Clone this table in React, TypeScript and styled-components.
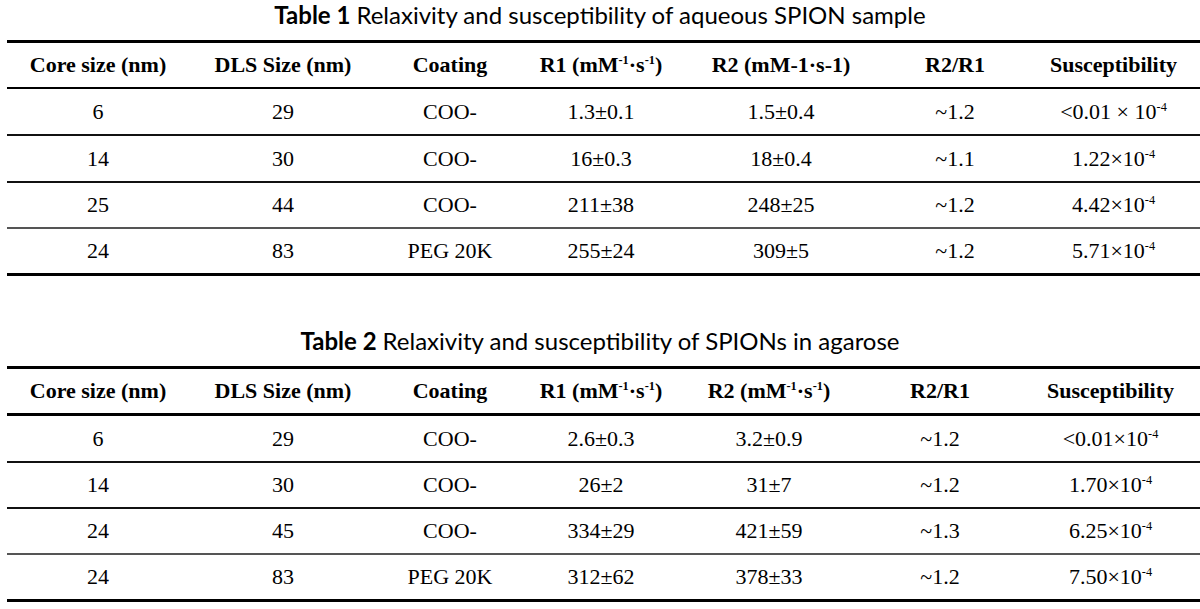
import React from "react";
import styled, { createGlobalStyle } from "styled-components";

const Global = createGlobalStyle`
  html, body { margin: 0; padding: 0; background: #fff; overflow: hidden; }
  body { width: 1200px; height: 609px; }
`;

const Page = styled.div`
  display: flex;
  flex-direction: column;
  padding-left: 7px;
  width: 1193px;
`;

const Section = styled.section<{ $top: number }>`
  display: flex;
  flex-direction: column;
  margin-top: ${(p) => p.$top}px;
`;

const Title = styled.h2`
  margin: 0;
  height: 40px;
  display: flex;
  align-items: flex-start;
  justify-content: center;
  margin-left: -7px;
  font-family: Lato, "Open Sans", sans-serif;
  font-weight: 400;
  font-size: 24px;
  line-height: 30px;
  color: #000;
  b { font-weight: 700; margin-right: 6px; }
`;

const Table = styled.div`
  display: flex;
  flex-direction: column;
  border-top: 3px solid #000;
  border-bottom: 3px solid #000;
`;

const Row = styled.div<{ $cols: string; $line?: string; $lw?: number; $h: number }>`
  display: grid;
  grid-template-columns: ${(p) => p.$cols};
  height: ${(p) => p.$h}px;
  align-items: center;
  border-bottom: ${(p) => (p.$line ? `${p.$lw ?? 2}px solid ${p.$line}` : "none")};
  box-sizing: border-box;
`;

const Cell = styled.div<{ $head?: boolean }>`
  text-align: center;
  font-family: "Liberation Serif", "Times New Roman", serif;
  font-size: 22px;
  font-weight: ${(p) => (p.$head ? 700 : 400)};
  color: #000;
  white-space: nowrap;
  sup {
    font-size: 0.56em;
    vertical-align: 0;
    position: relative;
    top: -0.62em;
    line-height: 0;
  }
`;

type TableData = {
  num: number;
  title: string;
  cols: string;
  head: React.ReactNode[];
  headH: number;
  headLine: number;
  rowH: number[];
  rows: React.ReactNode[][];
  top: number;
};

const E4 = (v: string) => (
  <>
    {v}×10<sup>-4</sup>
  </>
);

const unit = (
  <>
    (mM<sup>-1</sup>·s<sup>-1</sup>)
  </>
);

const tables: TableData[] = [
  {
    num: 1,
    title: "Relaxivity and susceptibility of aqueous SPION sample",
    cols: "182px 188px 146px 156px 204px 144px 1fr",
    top: 0,
    headH: 46,
    headLine: 2,
    rowH: [47, 47, 46, 44],
    head: [
      "Core size (nm)",
      "DLS Size (nm)",
      "Coating",
      <>R1 {unit}</>,
      "R2 (mM-1·s-1)",
      "R2/R1",
      "Susceptibility",
    ],
    rows: [
      ["6", "29", "COO-", "1.3±0.1", "1.5±0.4", "~1.2", <>{"<0.01 × 10"}<sup>-4</sup></>],
      ["14", "30", "COO-", "16±0.3", "18±0.4", "~1.1", E4("1.22")],
      ["25", "44", "COO-", "211±38", "248±25", "~1.2", E4("4.42")],
      ["24", "83", "PEG 20K", "255±24", "309±5", "~1.2", E4("5.71")],
    ],
  },
  {
    num: 2,
    title: "Relaxivity and susceptibility of SPIONs in agarose",
    cols: "182px 188px 146px 156px 180px 162px 1fr",
    top: 50,
    headH: 47,
    headLine: 3,
    rowH: [47, 46, 46, 44],
    head: [
      "Core size (nm)",
      "DLS Size (nm)",
      "Coating",
      <>R1 {unit}</>,
      <>R2 {unit}</>,
      "R2/R1",
      "Susceptibility",
    ],
    rows: [
      ["6", "29", "COO-", "2.6±0.3", "3.2±0.9", "~1.2", E4("<0.01")],
      ["14", "30", "COO-", "26±2", "31±7", "~1.2", E4("1.70")],
      ["24", "45", "COO-", "334±29", "421±59", "~1.3", E4("6.25")],
      ["24", "83", "PEG 20K", "312±62", "378±33", "~1.2", E4("7.50")],
    ],
  },
];

const lineColor = (i: number, n: number) => {
  if (i === n - 1) return undefined;
  if (i === n - 2) return "#555";
  return "#111";
};

export default function App() {
  return (
    <>
      <Global />
      <Page>
        {tables.map((t) => (
          <Section key={t.num} $top={t.top}>
            <Title>
              <b>Table {t.num}</b> {t.title}
            </Title>
            <Table>
              <Row $cols={t.cols} $h={t.headH} $line="#000" $lw={t.headLine}>
                {t.head.map((h, i) => (
                  <Cell key={i} $head>
                    {h}
                  </Cell>
                ))}
              </Row>
              {t.rows.map((r, ri) => (
                <Row
                  key={ri}
                  $cols={t.cols}
                  $h={t.rowH[ri]}
                  $line={lineColor(ri, t.rows.length)}
                >
                  {r.map((c, ci) => (
                    <Cell key={ci}>{c}</Cell>
                  ))}
                </Row>
              ))}
            </Table>
          </Section>
        ))}
      </Page>
    </>
  );
}
